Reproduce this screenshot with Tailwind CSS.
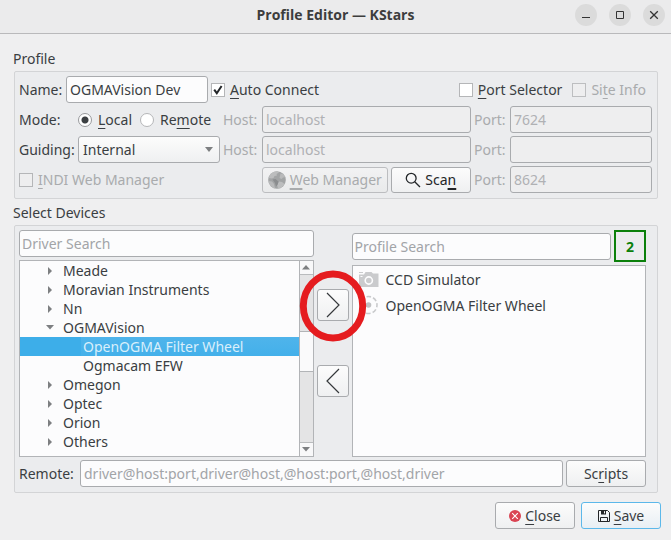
<!DOCTYPE html>
<html lang="en">
<head>
<meta charset="utf-8">
<title>Profile Editor — KStars</title>
<script src="https://cdn.jsdelivr.net/npm/@tailwindcss/browser@4"></script>
</head>
<body class="min-h-screen bg-[#efeff0] font-['Noto_Sans',sans-serif] text-[14px] leading-[19px] text-[#3a3e42]">
<header class="relative flex h-[34px] items-center justify-center border-b border-[#b9b9bb] bg-[#ebebec]">
  <h1 class="pb-[4px] font-['Open_Sans',sans-serif] text-[14px] font-bold text-[#3d3d3d]">Profile Editor — KStars</h1>
  <div class="absolute right-[6px] top-[4px] flex gap-3">
    <button aria-label="Minimize" class="grid size-[22px] place-items-center rounded-full bg-[#dbdbdb]"><svg width="10" height="10" viewBox="0 0 10 10" fill="none" stroke="#333" stroke-width="1"><path d="M1 7.5h8"/></svg></button>
    <button aria-label="Maximize" class="grid size-[22px] place-items-center rounded-full bg-[#dbdbdb]"><svg width="10" height="10" viewBox="0 0 10 10" fill="none" stroke="#333" stroke-width="1"><path d="M1.5 1.5h7v7h-7z"/></svg></button>
    <button aria-label="Close window" class="grid size-[22px] place-items-center rounded-full bg-[#dbdbdb]"><svg width="10" height="10" viewBox="0 0 10 10" fill="none" stroke="#333" stroke-width="1.3"><path d="M1.2 1.2l7.6 7.6M8.8 1.2L1.2 8.8"/></svg></button>
  </div>
</header>

<main class="pl-[14px] pr-[13px] pt-[15px]">
  <section aria-labelledby="profile-title">
    <h2 id="profile-title" class="-ml-px h-[22px]">Profile</h2>
    <div class="flex flex-col gap-[3px] rounded-[2px] border border-[#d3d4d6] bg-[#ebecee] pb-[5px] pl-[4px] pr-[5px] pt-[4px]">
      <div class="flex h-[27px] items-center">
        <label for="name" class="w-[47px] whitespace-nowrap">Name:</label>
        <input id="name" value="OGMAVision Dev" class="h-[27px] w-[142px] rounded-[3px] border border-[#a9abae] bg-[#fcfcfd] px-[3px]">
        <label class="ml-[3px] flex items-center gap-[5px] whitespace-nowrap">
          <span class="relative size-[14px]"><input type="checkbox" checked class="peer block size-[14px] appearance-none border border-[#b5b6b8] bg-white"><svg class="pointer-events-none absolute inset-0 hidden peer-checked:block" width="14" height="14" viewBox="0 0 14 14" fill="none" stroke="#232629" stroke-width="2"><path d="M3.2 6.6l2.6 3.6L10.6 3"/></svg></span>
          <span><u class="underline-offset-3">A</u>uto Connect</span></label>
        <label class="ml-auto flex items-center gap-[5px] whitespace-nowrap"><input type="checkbox" class="size-[14px] appearance-none border border-[#b5b6b8] bg-white"><span><u class="underline-offset-3">P</u>ort Selector</span></label>
        <label class="ml-[10px] mr-[6px] flex items-center gap-[5px] whitespace-nowrap text-[#a9abad]"><input type="checkbox" disabled class="size-[14px] appearance-none border border-[#bdbec0] bg-[#eeeeef]"><span>Si<u class="underline-offset-3">t</u>e Info</span></label>
      </div>
      <div class="grid grid-cols-[59px_145px_39px_minmax(0,1fr)_39px_142px] items-center">
        <span>Mode:</span>
        <div class="flex items-center">
          <label class="flex items-center gap-[6px]"><input type="radio" name="mode" checked class="size-[14px] appearance-none rounded-full border border-[#98999c] bg-white bg-[radial-gradient(circle,#3c3f42_3px,transparent_4px)]"><span><u class="underline-offset-3">L</u>ocal</span></label>
          <label class="ml-[8px] flex items-center gap-[6px]"><input type="radio" name="mode" class="size-[14px] appearance-none rounded-full border border-[#b5b6b8] bg-white"><span>Re<u class="underline-offset-3">m</u>ote</span></label>
        </div>
        <label for="host" class="text-[#a9abad]">Host:</label>
        <input id="host" disabled value="localhost" class="h-[27px] min-w-0 rounded-[3px] border border-[#a9abae] bg-[#eeeeef] px-[3px] text-[#b0b1b4]">
        <label for="port" class="pl-[3px] text-[#a9abad]">Port:</label>
        <input id="port" disabled value="7624" class="h-[27px] min-w-0 rounded-[3px] border border-[#a9abae] bg-[#eeeeef] px-[3px] text-[#b0b1b4]">
      </div>
      <div class="grid grid-cols-[59px_145px_39px_minmax(0,1fr)_39px_142px] items-center">
        <label for="guiding">Guiding:</label>
        <div class="relative w-[142px]">
          <select id="guiding" class="block h-[27px] w-full appearance-none rounded-[3px] border border-[#a9abae] bg-linear-to-b from-[#fcfcfc] to-[#eff0f1] pl-[4px]"><option>Internal</option></select>
          <svg class="pointer-events-none absolute right-[7px] top-[11px]" width="8" height="5" viewBox="0 0 8 5"><path d="M0 0h8L4 5z" fill="#7d7f81"/></svg>
        </div>
        <label for="guide-host" class="text-[#a9abad]">Host:</label>
        <input id="guide-host" disabled value="localhost" class="h-[27px] min-w-0 rounded-[3px] border border-[#a9abae] bg-[#eeeeef] px-[3px] text-[#b0b1b4]">
        <label for="guide-port" class="pl-[3px] text-[#a9abad]">Port:</label>
        <input id="guide-port" disabled class="h-[27px] min-w-0 rounded-[3px] border border-[#a9abae] bg-[#eeeeef] px-[3px]">
      </div>
      <div class="grid grid-cols-[243px_minmax(0,1fr)_39px_142px] items-center">
        <label class="flex items-center gap-[5px] whitespace-nowrap text-[#a9abad]"><input type="checkbox" disabled class="size-[14px] appearance-none border border-[#b5b6b8] bg-[#eeeeef]"><span><u class="underline-offset-3">I</u>NDI Web Manager</span></label>
        <div class="flex gap-[3px]">
          <button disabled class="flex h-[26px] min-w-0 flex-[126] items-center justify-center gap-[4px] whitespace-nowrap rounded-[3px] border border-[#bcbdc0] bg-linear-to-b from-[#f2f2f3] to-[#e9eaeb] text-[#a9abad]">
            <svg width="18" height="18" viewBox="0 0 18 18"><circle cx="9" cy="9" r="8.8" fill="#a2a4a5"/><path d="M1.500 4.500C3.500 1.500 6 .4 9 .3L11 1.500 8.500 3 9 4.500 6.500 5 5.500 7 3.500 7.500 1 7z" fill="#bcbdbe"/><path d="M.5 10l3.500.5L6 13l1 4.300C3.500 16.700 1 13.500.5 10zM12.500 2.500l3 .8 1.800 3-2.300.2-1.500 1.500-2-1z" fill="#b9babb"/><path d="M11 10.500l3 .5 2.500 2C15 15.800 12.500 17.500 10 17.600L9 14z" fill="#bcbdbe"/><path d="M4.500 8.500l3-.5 3 2.500-1 3.500-1.500 1.500L7 12z" fill="#8b8d8f"/></svg>
            <span><u class="underline-offset-3 decoration-2">W</u>eb Manager</span></button>
          <button class="flex h-[26px] min-w-0 flex-[80] items-center justify-center gap-[4px] rounded-[3px] border border-[#a9abae] bg-linear-to-b from-[#fcfcfc] to-[#eff0f1] text-[#232629]">
            <svg width="16" height="16" viewBox="0 0 16 16" fill="none" stroke="#232629" stroke-width="1.300"><circle cx="6.200" cy="6.200" r="4.900"/><path d="M9.700 9.700l5.300 5.300"/></svg>
            <span>Sca<u class="underline-offset-3 decoration-2">n</u></span></button>
        </div>
        <label for="web-port" class="pl-[3px] text-[#a9abad]">Port:</label>
        <input id="web-port" disabled value="8624" class="h-[27px] min-w-0 rounded-[3px] border border-[#a9abae] bg-[#eeeeef] px-[3px] text-[#b0b1b4]">
      </div>
    </div>
  </section>

  <section aria-labelledby="devices-title" class="pt-[4px]">
    <h2 id="devices-title" class="-ml-px h-[22px]">Select Devices</h2>
    <div class="rounded-[2px] border border-[#d3d4d6] bg-[#ebecee] pb-[5px] pl-[4px] pr-[11px] pt-[4px]">
      <div class="flex h-[227px] gap-[3px]">
        <div class="flex min-w-0 flex-1 flex-col gap-[3px]">
          <input aria-label="Driver Search" placeholder="Driver Search" class="h-[27px] w-full rounded-[3px] border border-[#a9abae] bg-[#fcfcfd] px-[2px] placeholder:text-[#a2a4a8]">
          <div class="flex min-h-0 flex-1 border border-[#b2b4b7] bg-[#fcfcfd]">
            <ul role="tree" aria-label="Drivers" class="min-w-0 flex-1 overflow-hidden whitespace-nowrap">
              <li role="treeitem" class="flex items-center"><svg class="ml-[27px] mr-[10px]" width="6" height="8" viewBox="0 0 6 8"><path d="M1 0l4 4-4 4z" fill="#7d7f81"/></svg>Meade</li>
              <li role="treeitem" class="flex items-center"><svg class="ml-[27px] mr-[10px]" width="6" height="8" viewBox="0 0 6 8"><path d="M1 0l4 4-4 4z" fill="#7d7f81"/></svg>Moravian Instruments</li>
              <li role="treeitem" class="flex items-center"><svg class="ml-[27px] mr-[10px]" width="6" height="8" viewBox="0 0 6 8"><path d="M1 0l4 4-4 4z" fill="#7d7f81"/></svg>Nn</li>
              <li role="treeitem" aria-expanded="true">
                <div class="flex items-center"><svg class="ml-[26px] mr-[9px]" width="8" height="5" viewBox="0 0 8 5"><path d="M0 0h8L4 4.500z" fill="#7d7f81"/></svg>OGMAVision</div>
                <ul role="group">
                  <li role="treeitem" aria-selected="true" class="bg-[#3daee9] pl-[61px] text-[#d9effb]"><span class="block bg-linear-to-b from-[#4fb4eb] to-[#43b0ea] pl-[2px]">OpenOGMA Filter Wheel</span></li>
                  <li role="treeitem" class="pl-[63px]">Ogmacam EFW</li>
                </ul>
              </li>
              <li role="treeitem" class="flex items-center"><svg class="ml-[27px] mr-[10px]" width="6" height="8" viewBox="0 0 6 8"><path d="M1 0l4 4-4 4z" fill="#7d7f81"/></svg>Omegon</li>
              <li role="treeitem" class="flex items-center"><svg class="ml-[27px] mr-[10px]" width="6" height="8" viewBox="0 0 6 8"><path d="M1 0l4 4-4 4z" fill="#7d7f81"/></svg>Optec</li>
              <li role="treeitem" class="flex items-center"><svg class="ml-[27px] mr-[10px]" width="6" height="8" viewBox="0 0 6 8"><path d="M1 0l4 4-4 4z" fill="#7d7f81"/></svg>Orion</li>
              <li role="treeitem" class="flex items-center"><svg class="ml-[27px] mr-[10px]" width="6" height="8" viewBox="0 0 6 8"><path d="M1 0l4 4-4 4z" fill="#7d7f81"/></svg>Others</li>
            </ul>
            <div class="flex w-[14px] flex-col border-l border-[#b2b4b7] bg-[#e4e4e5]">
              <button aria-label="Scroll up" class="grid h-[14px] place-items-center border-b border-[#b9bbbd] bg-[#f8f8f9]"><svg width="8" height="5" viewBox="0 0 8 5"><path d="M0 4.500h8L4 0z" fill="#7d7f81"/></svg></button>
              <div class="flex-[56]"></div>
              <div class="flex-[40] border-y border-[#b2b4b7] bg-[#fafafb]"></div>
              <div class="flex-[70]"></div>
              <button aria-label="Scroll down" class="grid h-[14px] place-items-center border-t border-[#b9bbbd] bg-[#f8f8f9]"><svg width="8" height="5" viewBox="0 0 8 5"><path d="M0 0h8L4 4.500z" fill="#7d7f81"/></svg></button>
            </div>
          </div>
        </div>
        <div class="flex flex-col items-center gap-[44px] pt-[59px]">
          <div class="relative size-[32px]">
            <button aria-label="Add driver" class="grid size-[32px] place-items-center rounded-[3px] border border-[#a9abae] bg-linear-to-b from-[#fcfcfc] to-[#eff0f1]"><svg width="26" height="26" viewBox="0 0 26 26" fill="none" stroke="#35383b" stroke-width="1.200"><path d="M7 1l12 12L7 25"/></svg></button>
            <svg class="pointer-events-none absolute -left-[18px] -top-[19px] z-10 max-w-none" width="68" height="72" viewBox="0 0 68 72" fill="none"><ellipse cx="34" cy="36" rx="29.700" ry="32" stroke="#e51c1f" stroke-width="6.900"/></svg>
          </div>
          <button aria-label="Remove driver" class="grid size-[32px] place-items-center rounded-[3px] border border-[#a9abae] bg-linear-to-b from-[#fcfcfc] to-[#eff0f1]"><svg width="26" height="26" viewBox="0 0 26 26" fill="none" stroke="#35383b" stroke-width="1.200"><path d="M19 1L7 13l12 12"/></svg></button>
        </div>
        <div class="flex min-w-0 flex-1 flex-col gap-[3px]">
          <div class="flex items-center gap-[3px]">
            <input aria-label="Profile Search" placeholder="Profile Search" class="h-[27px] min-w-0 flex-1 rounded-[3px] border border-[#a9abae] bg-[#fcfcfd] px-[2px] placeholder:text-[#a2a4a8]">
            <output class="grid size-[32px] place-items-center border-2 border-[#0b800b] font-bold text-[#0b800b]">2</output>
          </div>
          <ul aria-label="Profile drivers" class="min-h-0 flex-1 border border-[#b2b4b7] bg-[#fcfcfd]">
            <li class="flex h-[26px] items-center gap-[7px] pl-[5px]"><svg width="21" height="20" viewBox="0 0 21 20" fill="none"><path d="M1 5.500h5L7.500 3h6L15 4.500h5.500V18H1z" fill="#cacbcd"/><path d="M1 3.500h4" stroke="#cacbcd"/><circle cx="10.800" cy="11.500" r="3.600" stroke="#fcfcfd" stroke-width="1.600"/><path d="M2.500 7.500h2" stroke="#fcfcfd"/></svg>CCD Simulator</li>
            <li class="flex h-[26px] items-center gap-[7px] pl-[5px]"><svg width="21" height="20" viewBox="0 0 21 20" fill="none"><circle cx="10.500" cy="10" r="8.500" stroke="#c9cacc" stroke-width="1.600" stroke-dasharray="4.500 2.175" stroke-dashoffset="2.200"/><circle cx="10.500" cy="10" r="2.800" fill="#c0c1c3"/></svg>OpenOGMA Filter Wheel</li>
          </ul>
        </div>
      </div>
      <div class="mt-[3px] flex items-center">
        <label for="remote" class="w-[61px]">Remote:</label>
        <input id="remote" placeholder="driver@host:port,driver@host,@host:port,@host,driver" class="h-[27px] min-w-0 flex-1 rounded-[3px] border border-[#a9abae] bg-[#fcfcfd] px-[3px] placeholder:text-[#a2a4a8]">
        <button class="ml-[3px] h-[27px] w-[80px] rounded-[3px] border border-[#a9abae] bg-linear-to-b from-[#fcfcfc] to-[#eff0f1]">Sc<u class="underline-offset-3">r</u>ipts</button>
      </div>
    </div>
  </section>
</main>
<footer class="flex justify-end gap-[6px] pb-[11px] pr-[10px] pt-[9px]">
  <button class="flex h-[27px] w-[80px] items-center justify-center gap-[4px] rounded-[3px] border border-[#a9abae] bg-linear-to-b from-[#fcfcfc] to-[#eff0f1]"><svg width="12" height="12" viewBox="0 0 12 12"><circle cx="6" cy="6" r="6" fill="#da4453"/><path d="M3.200 3.200l5.600 5.600M8.800 3.200L3.200 8.800" stroke="#fff" stroke-width="1.100"/></svg><span><u class="underline-offset-3">C</u>lose</span></button>
  <button class="flex h-[27px] w-[80px] items-center justify-center gap-[4px] rounded-[3px] border border-[#5cb8ea] bg-linear-to-b from-[#fcfcfc] to-[#e8eff4]"><svg width="12" height="12" viewBox="0 0 12 12" fill="none" stroke="#232629"><path d="M.5.5h9l2 2v9H.5zM2.500 11.500v-4h7v4"/><path d="M3 .5h5v4H3z" fill="#232629" stroke="none"/><path d="M6.500 1.200v2.200" stroke="#fcfcfc"/></svg><span><u class="underline-offset-3">S</u>ave</span></button>
</footer>
</body>
</html>
